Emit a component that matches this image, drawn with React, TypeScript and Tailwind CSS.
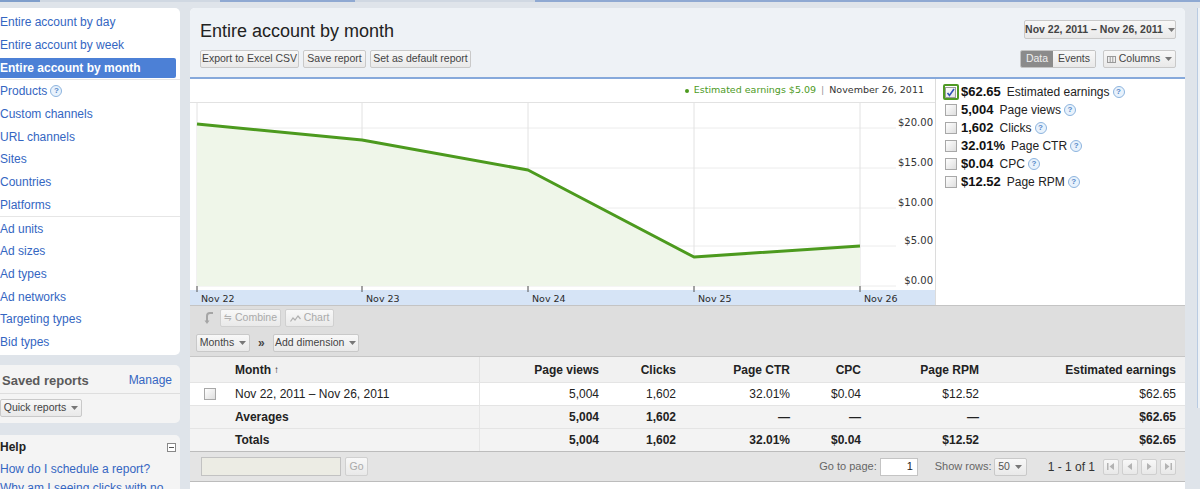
import React from "react";

const navGroups = [
  ["Entire account by day", "Entire account by week", "Entire account by month"],
  ["Products", "Custom channels", "URL channels", "Sites", "Countries", "Platforms"],
  ["Ad units", "Ad sizes", "Ad types", "Ad networks", "Targeting types", "Bid types"],
];

const metrics = [
  { value: "$62.65", label: "Estimated earnings", checked: true },
  { value: "5,004", label: "Page views" },
  { value: "1,602", label: "Clicks" },
  { value: "32.01%", label: "Page CTR" },
  { value: "$0.04", label: "CPC" },
  { value: "$12.52", label: "Page RPM" },
];

const cols = [
  { label: "Page views", w: "w-[128px]" },
  { label: "Clicks", w: "w-[77px]" },
  { label: "Page CTR", w: "w-[114px]" },
  { label: "CPC", w: "w-[71px]" },
  { label: "Page RPM", w: "w-[118px]" },
  { label: "Estimated earnings", w: "w-[197px]" },
];

const rows = [
  { name: "Nov 22, 2011 – Nov 26, 2011", cells: ["5,004", "1,602", "32.01%", "$0.04", "$12.52", "$62.65"], bold: false, bg: "bg-white", box: true },
  { name: "Averages", cells: ["5,004", "1,602", "—", "—", "—", "$62.65"], bold: true, bg: "bg-[#f3f3f3]", box: false },
  { name: "Totals", cells: ["5,004", "1,602", "32.01%", "$0.04", "$12.52", "$62.65"], bold: true, bg: "bg-[#f3f3f3]", box: false },
];

// chart points, relative to the plot svg
const xs = [7, 172, 338, 504, 670];
const ys = [21, 37, 67, 154, 143];
const gridY = [25, 65, 105, 143, 183];
const yLabels = ["$20.00", "$15.00", "$10.00", "$5.00", "$0.00"];
const xLabels = ["Nov 22", "Nov 23", "Nov 24", "Nov 25", "Nov 26"];

const Help = () => (
  <span className="ml-[3px] inline-flex h-[12px] w-[12px] items-center justify-center rounded-full border border-[#8db4de] bg-[#e8f2fc] text-[8px] font-bold leading-none text-[#5588c8]">
    ?
  </span>
);

const Caret = ({ color = "#777" }: { color?: string }) => (
  <svg width="7" height="4" viewBox="0 0 7 4" className="ml-[5px] shrink-0">
    <path d="M0 0h7L3.5 4z" fill={color} />
  </svg>
);

const Btn = ({ children, className = "" }: { children: React.ReactNode; className?: string }) => (
  <div
    className={`flex h-[18px] items-center justify-center whitespace-nowrap rounded-[2px] border border-[#c9c9c9] bg-gradient-to-b from-[#f8f8f8] to-[#e9e9e9] text-[10.5px] text-[#444] ${className}`}
  >
    {children}
  </div>
);

const Box = () => (
  <div className="h-[12px] w-[12px] border border-[#a8a8a8] bg-gradient-to-br from-[#ffffff] to-[#dedede]" />
);

const CheckedBox = () => (
  <div className="flex h-[16px] w-[16px] items-center justify-center rounded-[2px] border-2 border-[#4f9a24] bg-white">
    <div className="flex h-[11px] w-[11px] items-center justify-center border border-[#9a9a9a] bg-gradient-to-br from-[#ffffff] to-[#e2e2e2]">
      <svg width="9" height="9" viewBox="0 0 9 9">
        <path d="M1.5 5l2 2.5L8 1" stroke="#2f50b8" strokeWidth="1.6" fill="none" />
      </svg>
    </div>
  </div>
);

const PagerBtn = ({ d }: { d: string }) => (
  <div className="flex h-[16px] w-[16px] items-center justify-center rounded-[2px] border border-[#cfcfcf] bg-gradient-to-b from-[#f8f8f8] to-[#e8e8e8]">
    <svg width="8" height="7" viewBox="0 0 8 7">
      <path d={d} fill="#b3b3b3" />
    </svg>
  </div>
);

const Chart = () => {
  const line = xs.map((x, i) => `${x},${ys[i]}`).join(" ");
  const area = `${xs[0]},183 ${line} ${xs[4]},183`;
  return (
    <svg width="745" height="202" viewBox="0 0 745 202" className="block">
      {gridY.map((y) => (
        <line key={y} x1="7" x2="706" y1={y} y2={y} stroke="#ececec" />
      ))}
      {xs.map((x) => (
        <line key={x} x1={x} x2={x} y1="0" y2="187" stroke="#e2e2e2" />
      ))}
      <polygon points={area} fill="#eff6e9" />
      <polyline points={line} fill="none" stroke="#4c9a1e" strokeWidth="3" strokeLinejoin="round" />
      {yLabels.map((l, i) => (
        <text
          key={l}
          x="743"
          y={gridY[i] - 2}
          textAnchor="end"
          fontSize="10"
          fontFamily="'DejaVu Sans', Verdana, sans-serif"
          fill="#333"
        >
          {l}
        </text>
      ))}
      <rect x="0" y="187" width="745" height="15" fill="#d6e4f6" />
      {xs.map((x) => (
        <line key={`t${x}`} x1={x} x2={x} y1="183" y2="189" stroke="#555" />
      ))}
      {xLabels.map((l, i) => (
        <text
          key={l}
          x={xs[i] + 4}
          y="199"
          fontSize="9.5"
          fontFamily="'DejaVu Sans', Verdana, sans-serif"
          fill="#2a2a2a"
        >
          {l}
        </text>
      ))}
    </svg>
  );
};

export default function App() {
  return (
    <div className="h-[489px] w-[1200px] overflow-hidden bg-[#dfe4ea] font-['Liberation_Sans',Arial,sans-serif]">
      {/* top strip */}
      <div className="flex h-[8px] items-start">
        <div className="h-[2px] w-[40px] bg-[#7f9ecb]" />
        <div className="h-[2px] w-[180px] bg-[#d0d8e2]" />
        <div className="h-[2px] w-[135px] bg-[#8fa9d2]" />
        <div className="h-[2px] w-[180px] bg-[#d0d8e2]" />
        <div className="h-[2px] flex-1 bg-[#8fa9d2]" />
      </div>

      <div className="flex">
        {/* sidebar */}
        <div className="flex w-[180px] flex-col">
          <div className="rounded-tr-[5px] rounded-br-[5px] bg-white pt-[3px] pb-[2px]">
            {navGroups.map((group, gi) => (
              <div key={gi} className={gi < 2 ? "border-b border-[#e6e6e6]" : ""}>
                {group.map((item) => {
                  const active = item === "Entire account by month";
                  return (
                    <div key={item} className="flex h-[22.7px] items-center text-[12px] text-[#3466c2]">
                      {active ? (
                        <div className="flex h-[20px] w-[176px] items-center rounded-r-[2px] bg-[#4c80d6] font-bold text-white">
                          {item}
                        </div>
                      ) : (
                        <span className="flex items-center">
                          {item}
                          {item === "Products" && <Help />}
                        </span>
                      )}
                    </div>
                  );
                })}
              </div>
            ))}
          </div>

          <div className="mt-[10px] h-[58px] rounded-r-[5px] bg-[#f4f4f4]">
            <div className="flex h-[29px] items-center justify-between border-b border-[#dedede] pt-[2px] pr-[8px] pl-[2px]">
              <span className="text-[13px] font-bold text-[#5a5a5a]">Saved reports</span>
              <span className="text-[12px] text-[#3466c2]">Manage</span>
            </div>
            <div className="pt-[5px]">
              <Btn className="w-[82px]">
                Quick reports
                <Caret />
              </Btn>
            </div>
          </div>

          <div className="mt-[12px] h-[60px] rounded-tr-[5px] bg-[#f4f4f4]">
            <div className="flex h-[24px] items-center justify-between pr-[4px]">
              <span className="text-[12px] font-bold text-[#222]">Help</span>
              <div className="flex h-[9px] w-[9px] items-center justify-center border border-[#888] bg-white">
                <div className="h-[1px] w-[5px] bg-[#555]" />
              </div>
            </div>
            <div className="mt-[1px] text-[12px] leading-[19px] text-[#3466c2]">
              <div>How do I schedule a report?</div>
              <div className="whitespace-nowrap">Why am I seeing clicks with no</div>
            </div>
          </div>
        </div>

        {/* main panel */}
        <div className="ml-[10px] flex w-[995px] flex-col overflow-hidden rounded-t-[5px] bg-white">
          <div className="flex h-[71px] justify-between border-b-2 border-[#86a9db] bg-[#eef2f6] pr-[9px] pl-[10px]">
            <div className="pt-[11px]">
              <div className="text-[18px] leading-[24px] text-[#222]">Entire account by month</div>
              <div className="mt-[7px] flex gap-[4px]">
                <Btn className="w-[99px]">Export to Excel CSV</Btn>
                <Btn className="w-[63px]">Save report</Btn>
                <Btn className="w-[101px]">Set as default report</Btn>
              </div>
            </div>
            <div className="flex flex-col items-end pt-[12px]">
              <Btn className="h-[19px] w-[152px] font-bold text-[#222]">
                Nov 22, 2011 – Nov 26, 2011
                <Caret />
              </Btn>
              <div className="mt-[11px] flex items-center">
                <div className="flex h-[18px] overflow-hidden rounded-[2px] border border-[#c4c4c4] text-[10.5px]">
                  <div className="flex w-[32px] items-center justify-center bg-[#8b8b8b] text-[#eee]">Data</div>
                  <div className="flex w-[42px] items-center justify-center bg-gradient-to-b from-[#f8f8f8] to-[#e9e9e9] text-[#444]">
                    Events
                  </div>
                </div>
                <Btn className="ml-[7px] w-[73px]">
                  <svg width="9" height="7" viewBox="0 0 9 7" className="mr-[3px]">
                    <rect x="0.5" y="0.5" width="8" height="6" fill="none" stroke="#999" />
                    <line x1="3.2" y1="0.5" x2="3.2" y2="6.5" stroke="#999" />
                    <line x1="5.8" y1="0.5" x2="5.8" y2="6.5" stroke="#999" />
                  </svg>
                  Columns
                  <Caret />
                </Btn>
              </div>
            </div>
          </div>

          {/* chart + metrics */}
          <div className="flex h-[226px]">
            <div className="flex w-[745px] flex-col">
              <div className="flex h-[24px] items-center justify-end border-b border-[#e2e2e2] pr-[11px] font-['DejaVu_Sans',Verdana,sans-serif] text-[9.5px]">
                <span className="mr-[5px] h-[4px] w-[4px] rounded-full bg-[#4c9a1e]" />
                <span className="text-[#4c9a1e]">Estimated earnings $5.09</span>
                <span className="mx-[5px] text-[#999]">|</span>
                <span className="text-[#333]">November 26, 2011</span>
              </div>
              <Chart />
            </div>
            <div className="w-[250px] border-l border-[#dcdcdc] pt-[4px] pl-[6px]">
              {metrics.map((m) => (
                <div key={m.label} className="flex h-[18px] items-center">
                  <div className="flex w-[17px] justify-center">{m.checked ? <CheckedBox /> : <Box />}</div>
                  <span className="ml-[2px] text-[13px] font-bold text-[#111]">{m.value}</span>
                  <span className="ml-[6px] text-[12px] text-[#222]">{m.label}</span>
                  <Help />
                </div>
              ))}
            </div>
          </div>

          {/* toolbar */}
          <div className="h-[51px] border-t border-[#c4c4c4] bg-[#dedede] pl-[6px]">
            <div className="mt-[3px] flex h-[18px] items-center">
              <svg width="12" height="14" viewBox="0 0 12 14" className="ml-[8px]">
                <path d="M9 2H6C4 2 3 3.5 3 5v6" fill="none" stroke="#a5a5a5" strokeWidth="2" />
                <path d="M0.5 9.5L3 13l2.5-3.5z" fill="#a5a5a5" />
              </svg>
              <Btn className="ml-[4px] w-[61px] border-[#d0d0d0] from-[#ececec] to-[#e4e4e4] text-[#aaa]">
                <span className="mr-[3px] text-[9px] text-[#b0b0b0]">⇋</span>
                Combine
              </Btn>
              <Btn className="ml-[4px] w-[49px] border-[#d0d0d0] from-[#ececec] to-[#e4e4e4] text-[#aaa]">
                <svg width="11" height="7" viewBox="0 0 11 7" className="mr-[3px]">
                  <path d="M0.5 6.5L3 3l2 2 3-4 2.5 3" fill="none" stroke="#b0b0b0" strokeWidth="1.2" />
                </svg>
                Chart
              </Btn>
            </div>
            <div className="mt-[7px] flex h-[18px] items-center">
              <Btn className="w-[54px]">
                Months
                <Caret />
              </Btn>
              <span className="mx-[8px] text-[12px] font-bold text-[#444]">»</span>
              <Btn className="w-[86px]">
                Add dimension
                <Caret />
              </Btn>
            </div>
          </div>

          {/* table */}
          <div className="border-t border-[#c6c6c6] text-[12px] text-[#222]">
            <div className="flex h-[25px] items-center bg-[#f1f1f1] font-bold">
              <div className="flex h-full w-[290px] items-center border-r border-[#e2e2e2] pl-[45px]">
                Month
                <span className="ml-[3px] text-[10px]">↑</span>
              </div>
              {cols.map((c) => (
                <div key={c.label} className={`${c.w} pr-[9px] text-right`}>
                  {c.label}
                </div>
              ))}
            </div>
            {rows.map((r) => (
              <div
                key={r.name}
                className={`flex h-[23px] items-center border-t border-[#e4e4e4] ${r.bg} ${r.bold ? "font-bold" : ""}`}
              >
                <div className="flex h-full w-[290px] items-center border-r border-[#e6e6e6]">
                  <div className="flex w-[45px] justify-center pr-[6px]">{r.box && <Box />}</div>
                  {r.name}
                </div>
                {r.cells.map((v, i) => (
                  <div key={i} className={`${cols[i].w} pr-[9px] text-right`}>
                    {v}
                  </div>
                ))}
              </div>
            ))}
          </div>

          {/* footer */}
          <div className="flex h-[31px] items-center justify-between border-t border-b border-[#bcbcbc] bg-[#e4e4e4] pr-[9px] pl-[11px]">
            <div className="flex items-center">
              <div className="h-[19px] w-[140px] border border-[#c2c2c2] bg-[#ecece4]" />
              <Btn className="ml-[4px] h-[19px] w-[23px] border-[#d0d0d0] text-[#aaa]">Go</Btn>
            </div>
            <div className="flex items-center text-[11px] text-[#666]">
              <span>Go to page:</span>
              <div className="ml-[3px] flex h-[18px] w-[38px] items-center justify-end border border-[#c4c4c4] bg-white pr-[4px] text-[#222]">
                1
              </div>
              <span className="ml-[17px]">Show rows:</span>
              <Btn className="ml-[2px] w-[33px] text-[#555]">
                50
                <Caret />
              </Btn>
              <span className="ml-[21px] text-[12px] text-[#333]">1 - 1 of 1</span>
              <div className="ml-[8px] flex gap-[3px]">
                <PagerBtn d="M0 0h1.5v7H0zM7 0v7L2.5 3.5z" />
                <PagerBtn d="M6 0v7L1.5 3.5z" />
                <PagerBtn d="M2 0v7l4.5-3.5z" />
                <PagerBtn d="M1 0v7l4.5-3.5zM6.5 0H8v7H6.5z" />
              </div>
            </div>
          </div>
          <div className="flex-1 bg-white" />
        </div>

        <div className="ml-[12px] h-[400px] flex-1 border-l border-[#b9cbe2] bg-[#eef2f6]" />
      </div>
    </div>
  );
}
